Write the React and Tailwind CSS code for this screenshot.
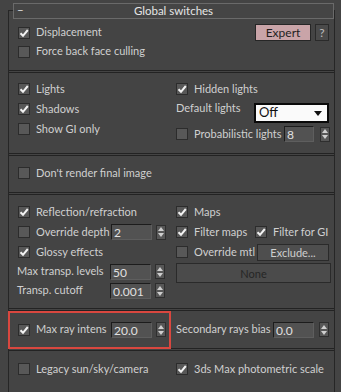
import React from "react";

const FONT = { fontFamily: "Lato, 'Liberation Sans', sans-serif" };

function Check({ checked }) {
  return (
    <div className="w-[12px] h-[12px] shrink-0 bg-[#585858] border border-[#2c2c2c] flex items-center justify-center">
      {checked && (
        <svg width="10" height="10" viewBox="0 0 10 10">
          <path d="M1.5 5.2 L4 7.8 L8.8 2" stroke="#f2f2f2" strokeWidth="2" fill="none" />
        </svg>
      )}
    </div>
  );
}

function CB({ checked, label, className = "" }) {
  return (
    <div className={"flex items-center gap-[6px] shrink-0 " + className}>
      <Check checked={checked} />
      <span className="whitespace-nowrap">{label}</span>
    </div>
  );
}

function Arrows() {
  return (
    <div className="w-[10px] h-[15px] shrink-0 bg-[#575757] border border-[#2e2e2e] flex flex-col items-center justify-center gap-[2px]">
      <svg width="6" height="4" viewBox="0 0 6 4">
        <path d="M0 4 L3 0 L6 4 Z" fill="#cfcfcf" />
      </svg>
      <svg width="6" height="4" viewBox="0 0 6 4">
        <path d="M0 0 L3 4 L6 0 Z" fill="#cfcfcf" />
      </svg>
    </div>
  );
}

function Spin({ value, w = "w-[41px]", gap = "gap-[4px]" }) {
  return (
    <div className={"flex items-center shrink-0 " + gap}>
      <div
        className={
          w +
          " shrink-0 h-[16px] bg-[#525252] border-t border-l border-[#1c1c1c] border-r border-b border-r-[#5e5e5e] border-b-[#5e5e5e] text-[#e0e0e0] pl-[2px] leading-[15px] text-[12px]"
        }
      >
        {value}
      </div>
      <Arrows />
    </div>
  );
}

function Sep() {
  return <div className="h-[3px] border-t border-b border-[#232323]" />;
}

export default function App() {
  return (
    <div
      className="w-[341px] h-[392px] bg-[#444444] pt-[10px] overflow-hidden relative text-[11px] text-[#d0d0d0]"
      style={FONT}
    >
      <div className="ml-[8px] w-[327px] h-[400px] border-l border-r border-t border-[#262626]">
        {/* header */}
        <div className="-mt-[8px] ml-[4px] w-[321px] h-[16px] border border-[#6a6a6a] bg-[#454545] relative flex items-center justify-center leading-[14px] text-[11.5px]">
          <span className="absolute left-[3px] top-[-1px] text-[#e6e6e6]">–</span>
          <span className="text-[#e6e6e6]">Global switches</span>
        </div>

        {/* section 1 */}
        <div className="h-[51px] pl-[9px] pt-[4px]">
          <div className="h-[19px] flex items-center">
            <CB checked label="Displacement" />
            <div className="ml-auto mr-[5px] flex items-center gap-[4px]">
              <div className="w-[56px] h-[17px] bg-[#c9a4a8] border border-[#262626] text-[#1e1e1e] text-[12px] flex items-center justify-center leading-none">
                Expert
              </div>
              <div className="w-[14px] h-[17px] bg-[#4a4a4a] border border-[#2a2a2a] text-[#bdbdbd] text-[12px] flex items-center justify-center leading-none">
                ?
              </div>
            </div>
          </div>
          <div className="h-[19px] flex items-center">
            <CB label="Force back face culling" />
          </div>
        </div>
        <Sep />

        {/* section 2 */}
        <div className="h-[80px] pl-[9px] pt-[6px] flex">
          <div className="w-[158px] shrink-0 flex flex-col">
            <div className="h-[20px] flex items-center">
              <CB checked label="Lights" />
            </div>
            <div className="h-[20px] flex items-center">
              <CB checked label="Shadows" />
            </div>
            <div className="h-[20px] flex items-center">
              <CB label="Show GI only" />
            </div>
          </div>
          <div className="flex-1 flex flex-col">
            <div className="h-[20px] flex items-center">
              <CB checked label="Hidden lights" />
            </div>
            <div className="h-[24px] flex items-start">
              <span className="mt-[2px] leading-[14px] whitespace-nowrap">Default lights</span>
              <div className="ml-auto mr-[5px] mt-[4px] w-[75px] h-[20px] bg-[#fafafa] border-2 border-[#0a0a0a] text-[#111] flex items-center pl-[3px] pr-[5px] text-[13px]">
                <span>Off</span>
                <svg className="ml-auto" width="8" height="5" viewBox="0 0 8 5">
                  <path d="M0 0 L8 0 L4 5 Z" fill="#111" />
                </svg>
              </div>
            </div>
            <div className="h-[22px] flex items-center">
              <CB label="Probabilistic lights" className="w-[108px]" />
              <Spin value="8" w="w-[30px]" gap="gap-[6px]" />
            </div>
          </div>
        </div>
        <Sep />

        {/* section 3 */}
        <div className="h-[36px] pl-[9px] pt-[7px]">
          <div className="h-[20px] flex items-center">
            <CB label="Don't render final image" />
          </div>
        </div>
        <Sep />

        {/* section 4 */}
        <div className="h-[113px] pl-[9px] pt-[7px] flex">
          <div className="w-[158px] shrink-0 flex flex-col">
            <div className="h-[20px] flex items-center">
              <CB checked label="Reflection/refraction" />
            </div>
            <div className="h-[20px] flex items-center">
              <CB label="Override depth" className="w-[93px]" />
              <Spin value="2" />
            </div>
            <div className="h-[20px] flex items-center">
              <CB checked label="Glossy effects" />
            </div>
            <div className="h-[19px] flex items-center">
              <span className="w-[93px] -ml-px whitespace-nowrap">Max transp. levels</span>
              <Spin value="50" />
            </div>
            <div className="h-[19px] flex items-center">
              <span className="w-[93px] -ml-px whitespace-nowrap">Transp. cutoff</span>
              <Spin value="0.001" />
            </div>
          </div>
          <div className="flex-1 flex flex-col">
            <div className="h-[20px] flex items-center">
              <CB checked label="Maps" />
            </div>
            <div className="h-[20px] flex items-center">
              <CB checked label="Filter maps" className="w-[79px]" />
              <CB checked label="Filter for GI" />
            </div>
            <div className="h-[20px] flex items-center">
              <CB label="Override mtl" className="w-[81px]" />
              <div className="w-[72px] h-[17px] bg-[#4e4e4e] border border-[#2a2a2a] text-[#cfcfcf] flex items-center justify-center leading-none">
                Exclude...
              </div>
            </div>
            <div className="mt-[1px] mr-[3px] h-[20px] bg-[#4b4b4b] border border-[#2a2a2a] text-[#262626] flex items-center justify-center leading-none">
              None
            </div>
          </div>
        </div>
        <Sep />

        {/* section 5 */}
        <div className="h-[37px] pl-[9px] flex items-center">
          <div className="w-[158px] shrink-0 flex items-center">
            <CB checked label="Max ray intens" className="w-[93px]" />
            <Spin value="20.0" />
          </div>
          <div className="flex-1 flex items-center">
            <span className="whitespace-nowrap w-[97px] shrink-0">Secondary rays bias</span>
            <Spin value="0.0" gap="gap-[5px]" />
          </div>
        </div>
        <Sep />

        {/* section 6 */}
        <div className="pl-[9px] pt-[8px] flex">
          <div className="w-[158px] shrink-0 h-[20px] flex items-center">
            <CB label="Legacy sun/sky/camera" />
          </div>
          <div className="flex-1 h-[20px] flex items-center">
            <CB checked label="3ds Max photometric scale" />
          </div>
        </div>
      </div>

      {/* red highlight annotation */}
      <div className="absolute left-[8px] top-[311px] w-[163px] h-[38px] border-2 border-[#d9473f] pointer-events-none" />
    </div>
  );
}
